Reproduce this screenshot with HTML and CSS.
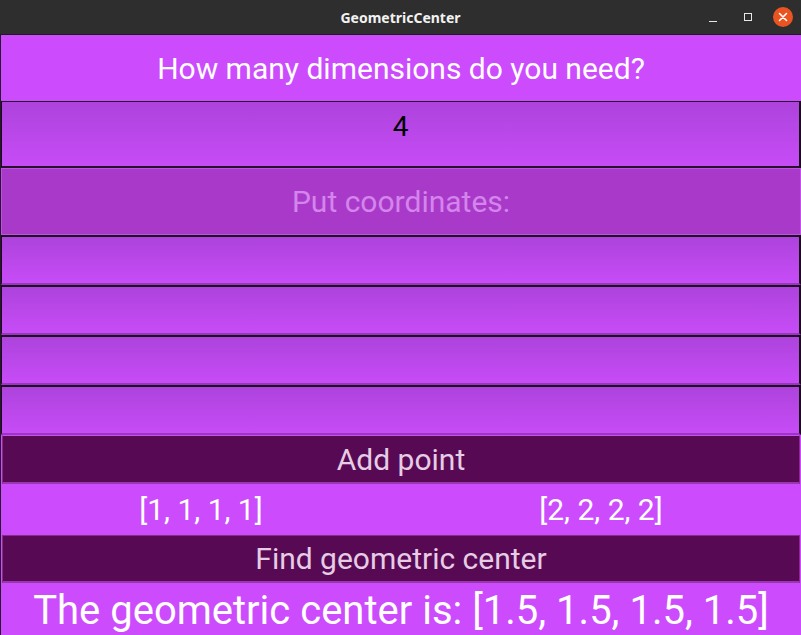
FILE: index.html
```html
<!DOCTYPE html>
<html>
<head>
<meta charset="utf-8">
<link rel="stylesheet" href="styles.css">
</head>
<body>
<div class="window">
  <div class="titlebar">
    <div class="title">GeometricCenter</div>
    <div class="controls">
      <span class="ctl min"></span>
      <span class="ctl max"></span>
      <span class="ctl close">
        <svg width="20" height="20" viewBox="0 0 20 20"><circle cx="10" cy="10" r="10" fill="#e95420"/><path d="M6.5 6.5 L13.5 13.5 M13.5 6.5 L6.5 13.5" stroke="#fff" stroke-width="1.6" stroke-linecap="round"/></svg>
      </span>
    </div>
  </div>
  <div class="app">
    <div class="label top">How many dimensions do you need?</div>
    <div class="field big"><span class="value">4</span></div>
    <div class="label sub">Put coordinates:</div>
    <div class="field"></div>
    <div class="field"></div>
    <div class="field"></div>
    <div class="field"></div>
    <div class="button add">Add point</div>
    <div class="points"><span>[1, 1, 1, 1]</span><span>[2, 2, 2, 2]</span></div>
    <div class="button find">Find geometric center</div>
    <div class="result">The geometric center is: [1.5, 1.5, 1.5, 1.5]</div>
  </div>
</div>
</body>
</html>
```
FILE: styles.css
```css
html, body {
  margin: 0;
  padding: 0;
  background: #cc4cfd;
}
.window {
  width: 801px;
  height: 635px;
  display: flex;
  flex-direction: column;
  overflow: hidden;
  font-family: Roboto, "Liberation Sans", sans-serif;
}
.titlebar {
  height: 35px;
  flex: none;
  background: #2f2e2e;
  display: flex;
  align-items: center;
  justify-content: center;
  position: relative;
  box-sizing: border-box;
  border-bottom: 1px solid #1f1a1f;
}
.title {
  color: #f2f2f2;
  font-family: "Noto Sans", "DejaVu Sans", sans-serif;
  font-weight: bold;
  font-size: 14px;
}
.controls {
  position: absolute;
  right: 8px;
  top: 7px;
  display: flex;
  align-items: center;
  gap: 15px;
}
.ctl {
  width: 20px;
  height: 20px;
  display: flex;
  align-items: center;
  justify-content: center;
  position: relative;
}
.ctl.min::before {
  content: "";
  width: 8px;
  height: 1px;
  background: #e8e8e8;
  margin-top: 8px;
}
.ctl.max::before {
  content: "";
  width: 6px;
  height: 6px;
  border: 1px solid #e8e8e8;
}
.app {
  flex: 1;
  display: flex;
  flex-direction: column;
  border-left: 1px solid #2a1530;
}
.label {
  display: flex;
  justify-content: center;
  font-size: 30px;
  box-sizing: border-box;
}
.label.top {
  height: 66px;
  color: #ffffff;
  background: #cc4cfd;
  align-items: center;
}
.label.sub {
  height: 67px;
  color: #d485ec;
  background: #a93ac9;
  border: 1px solid #c050e6;
  align-items: center;
}
.field {
  height: 50px;
  box-sizing: border-box;
  background: linear-gradient(#ad43dc, #c74cf7);
  border-top: 2px solid #1a0c1d;
  border-left: 1px solid #1a0c1d;
  border-right: 2px solid #1a0c1d;
  border-bottom: 2px solid #9b36bf;
}
.field.big {
  height: 67px;
  border-top: 1px solid #25122b;
  border-bottom: 2px solid #25122b;
  display: flex;
  justify-content: center;
  padding-top: 8px;
}
.value {
  color: #000;
  font-size: 28px;
  line-height: 34px;
}
.field + .button { border-top: 1px solid #cc4cfd; }
.button {
  display: flex;
  align-items: center;
  justify-content: center;
  background: #570a53;
  color: #e6cce4;
  font-size: 30px;
  box-sizing: border-box;
  border: 1px solid #8a2a8a;
  border-bottom: 2px solid #9a36b0;
  margin: 0 1px 0 1px;
}
.button.add { height: 49px; }
.button.find { height: 48px; }
.points {
  height: 51px;
  display: grid;
  grid-template-columns: 1fr 1fr;
  align-items: center;
  justify-items: center;
  color: #ffffff;
  font-size: 30px;
  box-sizing: border-box;
}
.result {
  height: 52px;
  display: flex;
  align-items: center;
  justify-content: center;
  color: #ffffff;
  font-size: 40px;
  padding-top: 2px;
  box-sizing: border-box;
  white-space: nowrap;
}
```
